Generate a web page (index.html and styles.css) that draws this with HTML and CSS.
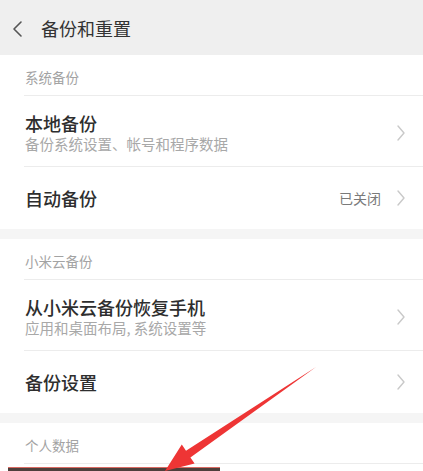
FILE: index.html
```html
<!DOCTYPE html>
<html lang="zh-CN">
<head>
<meta charset="utf-8">
<title>备份和重置</title>
<link rel="stylesheet" href="styles.css">
</head>
<body>
<div class="page">
  <header class="topbar">
    <svg class="back" width="12" height="18" viewBox="0 0 12 18"><polyline points="10,2 3,9 10,16" fill="none" stroke="#555" stroke-width="1.6" stroke-linecap="round" stroke-linejoin="round"/></svg>
    <span class="title">备份和重置</span>
  </header>

  <section class="group">
    <div class="label">系统备份</div>
    <div class="row two">
      <div class="texts">
        <div class="main">本地备份</div>
        <div class="sub">备份系统设置、帐号和程序数据</div>
      </div>
      <svg class="chev" width="10" height="18" viewBox="0 0 10 18"><polyline points="2,2 8,9 2,16" fill="none" stroke="#c9c9c9" stroke-width="1.4" stroke-linecap="round" stroke-linejoin="round"/></svg>
    </div>
    <div class="row one last">
      <div class="main">自动备份</div>
      <span class="value">已关闭</span>
      <svg class="chev" width="10" height="18" viewBox="0 0 10 18"><polyline points="2,2 8,9 2,16" fill="none" stroke="#c9c9c9" stroke-width="1.4" stroke-linecap="round" stroke-linejoin="round"/></svg>
    </div>
  </section>

  <div class="band"></div>

  <section class="group">
    <div class="label">小米云备份</div>
    <div class="row two">
      <div class="texts">
        <div class="main">从小米云备份恢复手机</div>
        <div class="sub">应用和桌面布局, 系统设置等</div>
      </div>
      <svg class="chev" width="10" height="18" viewBox="0 0 10 18"><polyline points="2,2 8,9 2,16" fill="none" stroke="#c9c9c9" stroke-width="1.4" stroke-linecap="round" stroke-linejoin="round"/></svg>
    </div>
    <div class="row one last">
      <div class="main">备份设置</div>
      <svg class="chev" width="10" height="18" viewBox="0 0 10 18"><polyline points="2,2 8,9 2,16" fill="none" stroke="#c9c9c9" stroke-width="1.4" stroke-linecap="round" stroke-linejoin="round"/></svg>
    </div>
  </section>

  <div class="band"></div>

  <section class="group">
    <div class="label">个人数据</div>
  </section>

  <div class="dark-bar"></div>

  <svg class="arrow" width="423" height="471" viewBox="0 0 423 471">
    <polygon points="316,367 190.4,457.4 194.6,463.6 165,471 181.8,444.6 186,450.8" fill="#ee3535"/>
  </svg>
</div>
</body>
</html>
```

FILE: styles.css
```css
html, body {
  margin: 0;
  padding: 0;
  background: #ffffff;
}

body {
  font-family: "Noto Sans CJK SC", "Noto Sans", "Liberation Sans", sans-serif;
  color: #333333;
  width: 423px;
  height: 471px;
  overflow: hidden;
}

.page {
  position: relative;
  width: 423px;
  height: 471px;
  overflow: hidden;
}

.topbar {
  height: 55px;
  background: #efefef;
  display: flex;
  align-items: center;
  padding-left: 11px;
  box-sizing: border-box;
}

.back {
  display: block;
  margin-top: 2px;
}

.title {
  margin-left: 18px;
  font-size: 18px;
  line-height: 24px;
  color: #333333;
  margin-top: 1px;
}

.group {
  padding-left: 24px;
}

.label {
  height: 41px;
  box-sizing: border-box;
  padding-top: 3px;
  padding-left: 1px;
  display: flex;
  align-items: center;
  font-size: 13.5px;
  color: #a3a3a3;
  border-bottom: 1px solid #ececec;
}

.row {
  display: flex;
  align-items: center;
  padding-right: 17px;
  padding-left: 1px;
  border-bottom: 1px solid #ececec;
  box-sizing: border-box;
}

.row.last {
  border-bottom: none;
}

.row.two {
  height: 71px;
  padding-top: 4px;
}

.row.one {
  height: 62px;
}

.texts {
  flex: 1;
  display: flex;
  flex-direction: column;
}

.main {
  flex: 1;
  font-size: 18px;
  line-height: 22px;
  font-weight: 500;
  color: #2e2e2e;
}

.sub {
  font-size: 14.5px;
  line-height: 20px;
  color: #a8a8a8;
}

.value {
  font-size: 14px;
  color: #7a7a7a;
  margin-right: 15px;
}

.chev {
  display: block;
  flex: none;
}

.band {
  height: 10px;
  background: #f5f5f5;
}

.dark-bar {
  position: absolute;
  left: 8px;
  top: 467px;
  width: 212px;
  height: 4px;
  background: #4e3f3b;
  border-top: 1px solid #d96a62;
}

.arrow {
  position: absolute;
  left: 0;
  top: 0;
  pointer-events: none;
}
```
